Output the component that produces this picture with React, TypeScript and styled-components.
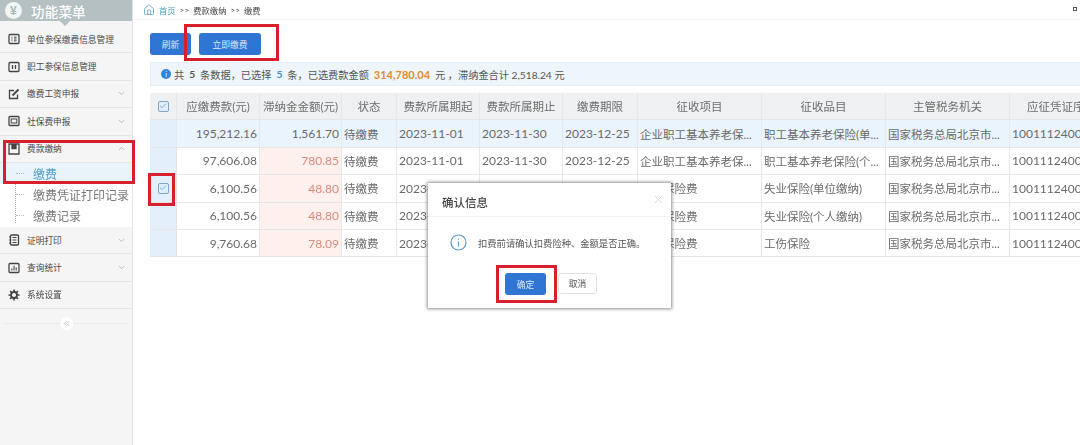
import React from "react";
import styled, { createGlobalStyle } from "styled-components";
import { ChevronDown, ChevronUp, X, Home, ChevronsLeft, Check } from "lucide-react";

const Global = createGlobalStyle`
  html, body { margin: 0; padding: 0; background: #fff; overflow: hidden; }
  body { font-family: "Lato", "Noto Sans CJK SC", sans-serif; color: #555; }
  #root { width: 1080px; height: 445px; }
`;
const Page = styled.div`
  position: relative; width: 1080px; height: 445px; display: flex; overflow: hidden; filter: blur(0.35px);
`;
const Side = styled.aside`
  width: 133px; flex: none; height: 445px; background: #f5f5f5; border-right: 1px solid #e4e4e4; box-sizing: border-box;
`;
const SideHead = styled.div`
  position: relative; height: 21px; background: #b4c0c2; display: flex; align-items: center; gap: 9px; padding-left: 5px;
  color: #fff; font-size: 13.5px; font-weight: 500; letter-spacing: 0.2px; margin-bottom: 5px;
  &::after { content: ""; position: absolute; left: 60px; top: 21px; border: 5px solid transparent; border-top-color: #b4c0c2; border-bottom: 0; }
`;
const Yen = styled.span`
  width: 17px; height: 17px; border-radius: 50%; background: #f2f5f5; color: #a9b7b9; font-size: 12px; font-weight: 700;
  display: flex; align-items: center; justify-content: center; font-family: "Liberation Sans", sans-serif;
`;
const NavRow = styled.div`
  height: 27.4px; box-sizing: border-box; border-bottom: 1px solid #e6e6e6; display: flex; align-items: center; padding: 0 6px 0 8px;
  font-size: 8.7px; color: #4a4a4a; gap: 7px;
  & > .chev { margin-left: auto; color: #aaa; }
`;
const SubList = styled.div`
  position: relative; background: #fff; height: 64px;
  &::before { content: ""; position: absolute; left: 15px; top: 0; bottom: 4px; border-left: 1px dotted #aaa; }
`;
const SubItem = styled.div<{ $active?: boolean }>`
  height: 21px; display: flex; align-items: center; padding-left: 33px; font-size: 12px; color: ${p => (p.$active ? "#4ea0c9" : "#7a7a7a")};
  background: ${p => (p.$active ? "#e9f3fa" : "transparent")}; white-space: nowrap; position: relative;
  &::before { content: ""; position: absolute; left: 16px; top: 10px; width: 8px; border-top: 1px dotted #bbb; }
`;
const Collapse = styled.div`
  position: relative; height: 28px; display: flex; align-items: center; justify-content: center;
  &::before { content: ""; position: absolute; left: 4px; right: 4px; top: 14px; border-top: 1px solid #ececec; }
`;
const CollapseBtn = styled.span`
  position: relative; width: 13px; height: 13px; border-radius: 50%; background: #fff; color: #aaa; display: flex; align-items: center; justify-content: center;
`;
const Main = styled.main`
  flex: 1; min-width: 0; display: flex; flex-direction: column; overflow: hidden;
`;
const Crumbs = styled.div`
  height: 20px; display: flex; align-items: center; gap: 4px; padding-left: 10px; font-size: 8.3px; color: #444; white-space: nowrap; border-bottom: 1px solid #f3f3f3; box-sizing: border-box; position: relative;
`;
const CrumbLink = styled.span` color: #4aa0b8; `;
const Dot = styled.span`
  position: absolute; right: 3px; top: 7px; width: 4px; height: 4px; border: 1px solid #555; box-sizing: border-box;
`;
const Toolbar = styled.div`
  display: flex; gap: 8px; padding: 13px 0 0 17px; height: 42px; box-sizing: border-box;
`;
const Btn = styled.button<{ $w: number }>`
  width: ${p => p.$w}px; height: 22px; border: none; border-radius: 3px; background: #2f75d4; color: #dbe9fa; font: 8.8px "Noto Sans CJK SC", sans-serif; padding: 0;
`;
const Info = styled.div`
  margin-left: 17px; height: 24px; background: #eef6fc; border: 1px solid #e3eff8; border-right: 0; box-sizing: border-box; display: flex; align-items: center;
  padding-left: 10px; font-size: 10.2px; color: #555; gap: 3px; white-space: nowrap;
`;
const InfoDot = styled.span`
  width: 10px; height: 10px; border-radius: 50%; background: #2f86e0; color: #fff; font-size: 7px; display: flex; align-items: center; justify-content: center;
`;
const B = styled.b<{ $c?: string; $s?: number }>`
  color: ${p => p.$c || "#555"}; font-size: ${p => p.$s || 10.2}px; font-weight: 700; margin: 0 2px;
`;
const Table = styled.div`
  margin: 7px 0 0 17px; width: 964px; display: grid;
  grid-template-columns: 27px 83px 82px 55px 83px 83px 75px 124px 124px 124px 104px;
  grid-auto-rows: 27.4px; font-size: 12px;
`;
const Cell = styled.div<{ $h?: boolean; $r?: boolean; $bg?: string; $c?: string; $cjk?: boolean }>`
  display: flex; align-items: center; overflow: hidden; white-space: nowrap; box-sizing: border-box;
  justify-content: ${p => (p.$h ? "center" : p.$r ? "flex-end" : "flex-start")};
  padding: ${p => (p.$h ? "0" : "0 2px 0 2px")};
  background: ${p => p.$bg || (p.$h ? "#eef0f2" : "transparent")};
  color: ${p => p.$c || (p.$h ? "#6e6e6e" : "#6a6a6a")};
  font-size: ${p => (p.$cjk ? 11.5 : 12)}px;
  border-right: 1px solid ${p => (p.$h ? "#e4e6e8" : "#e8e8e8")};
  border-bottom: 1px solid #e6e6e6;
`;
const Box = styled.span`
  width: 11px; height: 11px; border: 1px solid #7ea6c8; border-radius: 2px; background: #dfeefa; color: #4f8dc4; display: flex; align-items: center; justify-content: center; box-sizing: border-box;
`;
const RedBox = styled.div<{ $x: number; $y: number; $w: number; $h: number }>`
  position: absolute; left: ${p => p.$x}px; top: ${p => p.$y}px; width: ${p => p.$w}px; height: ${p => p.$h}px;
  border: 3px solid #d8202c; box-sizing: border-box; pointer-events: none; z-index: 5;
`;
const Dialog = styled.div`
  position: absolute; left: 428px; top: 183px; width: 243px; height: 125px; background: #fff; box-sizing: border-box;
  box-shadow: 0 0 3px 1px rgba(70,70,70,.6); z-index: 3; display: flex; flex-direction: column;
`;
const DialogHead = styled.div`
  height: 34px; border-bottom: 1px solid #f0f0f0; display: flex; align-items: center; justify-content: space-between; padding: 4px 6px 0 14px; box-sizing: border-box;
  font-size: 11.5px; font-weight: 500; color: #444; & svg { color: #c4c4c4; margin-top: -5px; }
`;
const DialogBody = styled.div`
  display: flex; align-items: center; gap: 11px; padding: 17px 0 0 22px; font-size: 9.3px; color: #555; white-space: nowrap;
`;
const DialogFoot = styled.div`
  display: flex; justify-content: flex-start; gap: 12px; padding: 22px 0 0 77px;
`;
const OkBtn = styled.button`
  width: 41px; height: 22px; border: none; border-radius: 3px; background: #2f75d4; color: #dbe9fa; font: 8.8px "Noto Sans CJK SC", sans-serif; padding: 0;
`;
const CancelBtn = styled.button`
  width: 39px; height: 21px; border: 1px solid #e2e2e2; border-radius: 3px; background: #fff; color: #555; font: 8.8px "Noto Sans CJK SC", sans-serif; padding: 0;
`;

const Ico = ({ k }: { k: number }) => (
  <svg width="12" height="12" viewBox="0 0 12 12" fill="none" stroke="#444" strokeWidth="1.3" style={{ flex: "none" }}>
    {k === 0 && <><rect x="1" y="1.5" width="10" height="9" rx="1" /><path d="M3.5 4.2h1M3.5 6h1M3.5 7.8h1M6 4.2h2.5M6 6h2.5M6 7.8h2.5" strokeWidth="1" /></>}
    {k === 1 && <><rect x="1" y="1.5" width="10" height="9" rx="1" /><path d="M4.5 4v4M7.5 4v4" /></>}
    {k === 2 && <><path d="M9.5 6.5V10.5H1.5V2.5H6" /><path d="M4.5 7.5L10.5 1.5" strokeWidth="1.8" /></>}
    {k === 3 && <><rect x="1" y="1.5" width="10" height="9" rx="1" /><rect x="3.2" y="4" width="5.6" height="4" strokeWidth="1" /></>}
    {k === 4 && <><path d="M1 1h10v10H1z" /><path d="M4 1v4.5h4V1" fill="#444" /></>}
    {k === 5 && <><rect x="2.5" y="1" width="8" height="10" rx="1" /><path d="M4.5 3.5h4M4.5 6h4M4.5 8.5h4M1 3h2M1 6h2M1 9h2" strokeWidth="1" /></>}
    {k === 6 && <><rect x="1" y="1.5" width="10" height="9" rx="1" /><path d="M3.8 8.5V6.5M6 8.5V3.8M8.2 8.5V5.5" strokeWidth="1.1" /></>}
    {k === 7 && <><circle cx="6" cy="6" r="3" strokeWidth="1.8" /><path d="M6 .5v2M6 9.5v2M.5 6h2M9.5 6h2M2.1 2.1l1.4 1.4M8.5 8.5l1.4 1.4M2.1 9.9l1.4-1.4M8.5 3.5l1.4-1.4" strokeWidth="1.6" /></>}
  </svg>
);

const Nav = ({ k, t, d, u }: { k: number; t: string; d?: boolean; u?: boolean }) => (
  <NavRow>
    <Ico k={k} />
    <span>{t}</span>
    {d && <ChevronDown className="chev" size={9} />}
    {u && <ChevronUp className="chev" size={9} />}
  </NavRow>
);

const heads = ["应缴费款(元)", "滞纳金金额(元)", "状态", "费款所属期起", "费款所属期止", "缴费期限", "征收项目", "征收品目", "主管税务机关", "应征凭证序号"];
const rows = [
  ["195,212.16", "1,561.70", "企业职工基本养老保...", "职工基本养老保险(单..."],
  ["97,606.08", "780.85", "企业职工基本养老保...", "职工基本养老保险(个..."],
  ["6,100.56", "48.80", "失业保险费", "失业保险(单位缴纳)"],
  ["6,100.56", "48.80", "失业保险费", "失业保险(个人缴纳)"],
  ["9,760.68", "78.09", "工伤保险费", "工伤保险"],
];

export default function App() {
  return (
    <Page>
      <Global />
      <Side>
        <SideHead><Yen>¥</Yen>功能菜单</SideHead>
        <Nav k={0} t="单位参保缴费信息管理" />
        <Nav k={1} t="职工参保信息管理" />
        <Nav k={2} t="缴费工资申报" d />
        <Nav k={3} t="社保费申报" d />
        <Nav k={4} t="费款缴纳" u />
        <SubList>
          <SubItem $active>缴费</SubItem>
          <SubItem>缴费凭证打印记录</SubItem>
          <SubItem>缴费记录</SubItem>
        </SubList>
        <Nav k={5} t="证明打印" d />
        <Nav k={6} t="查询统计" d />
        <Nav k={7} t="系统设置" />
        <Collapse><CollapseBtn><ChevronsLeft size={9} /></CollapseBtn></Collapse>
      </Side>
      <Main>
        <Crumbs>
          <Home size={12} color="#7fb0c4" />
          <CrumbLink>首页</CrumbLink><span>&gt;&gt;</span><span>费款缴纳</span><span>&gt;&gt;</span><span>缴费</span>
          <Dot />
        </Crumbs>
        <Toolbar>
          <Btn $w={41}>刷新</Btn>
          <Btn $w={62}>立即缴费</Btn>
        </Toolbar>
        <Info>
          <InfoDot>i</InfoDot>
          共 <B>5</B> 条数据，已选择 <B $c="#3d8fd6">5</B> 条，已选费款金额 <B $c="#e58a2e" $s={11}>314,780.04</B> 元 ，滞纳金合计 2,518.24 元
        </Info>
        <Table>
          <Cell $h><Box><Check size={8} strokeWidth={2} /></Box></Cell>
          {heads.map(h => <Cell $h $cjk key={h}>{h}</Cell>)}
          {rows.map((r, i) => {
            const bg = i === 0 ? "#eaf4fc" : undefined;
            return (
              <React.Fragment key={i}>
                <Cell $h $bg="#e3effa">{i === 2 && <Box><Check size={8} strokeWidth={2} /></Box>}</Cell>
                <Cell $r $bg={bg}>{r[0]}</Cell>
                <Cell $r $bg={i === 0 ? bg : "#fdf0ed"} $c={i === 0 ? "#6a6a6a" : "#d98a7c"}>{r[1]}</Cell>
                <Cell $cjk $bg={bg}>待缴费</Cell>
                <Cell $bg={bg}>2023-11-01</Cell>
                <Cell $bg={bg}>2023-11-30</Cell>
                <Cell $bg={bg}>2023-12-25</Cell>
                <Cell $cjk $bg={bg}>{r[2]}</Cell>
                <Cell $cjk $bg={bg}>{r[3]}</Cell>
                <Cell $cjk $bg={bg}>国家税务总局北京市...</Cell>
                <Cell $bg={bg}>100111240000000</Cell>
              </React.Fragment>
            );
          })}
        </Table>
      </Main>
      <Dialog>
        <DialogHead>确认信息<X size={13} strokeWidth={1.2} /></DialogHead>
        <DialogBody>
          <svg width="17" height="17" viewBox="0 0 17 17" fill="none" stroke="#5b9bd5" strokeWidth="1.2">
            <circle cx="8.5" cy="8.5" r="7.5" />
            <path d="M8.5 7.5v5M8.5 4.5v1.2" />
          </svg>
          扣费前请确认扣费险种、金额是否正确。
        </DialogBody>
        <DialogFoot><OkBtn>确定</OkBtn><CancelBtn>取消</CancelBtn></DialogFoot>
      </Dialog>
      <RedBox $x={184} $y={24} $w={95} $h={37} />
      <RedBox $x={3} $y={140} $w={132} $h={44} />
      <RedBox $x={148} $y={173} $w={27} $h={33} />
      <RedBox $x={496} $y={265} $w={61} $h={38} />
    </Page>
  );
}
